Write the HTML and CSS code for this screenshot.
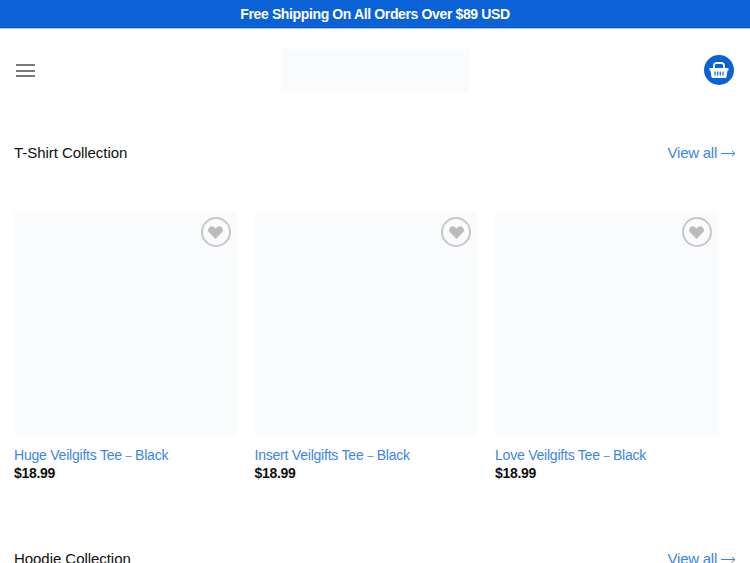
FILE: index.html
```html
<!DOCTYPE html>
<html lang="en">
<head>
  <meta charset="UTF-8" />
  <meta name="viewport" content="width=device-width, initial-scale=1.0"/>
  <title>Veilgifts</title>
  <link rel="stylesheet" href="styles.css">
</head>
<body>
  <div class="announce">Free Shipping On All Orders Over $89 USD</div>

  <header class="site-header">
    <button class="menu-btn" aria-label="Menu">
      <span></span><span></span><span></span>
    </button>
    <div class="logo"></div>
    <a class="cart-btn" href="#" aria-label="Cart">
      <svg width="20" height="16" viewBox="0 0 20 16" fill="none">
        <path d="M0.500 6h19v2.500h-1l-1 6.500a1 1 0 0 1-1 1H3.500a1 1 0 0 1-1-1l-1-6.500h-1z" fill="#fff"/>
        <path d="M5 6.500V3.500A2.500 2.500 0 0 1 7.500 1h5A2.500 2.500 0 0 1 15 3.500v3" stroke="#fff" stroke-width="1.800"/>
        <path d="M6 9.500v4M8.700 9.500v4M11.300 9.500v4M14 9.500v4" stroke="#0b62d6" stroke-width="1.200"/>
      </svg>
    </a>
  </header>

  <section class="collection">
    <div class="collection-head">
      <h2>T-Shirt Collection</h2>
      <a class="view-all" href="#">View all
        <svg width="15" height="9" viewBox="0 0 15 9" fill="none"><path d="M0 4.500h14M11 2l3 2.500L11 7" stroke="currentColor"/></svg>
      </a>
    </div>
    <div class="product-grid">
      <div class="product">
        <div class="thumb">
          <span class="wish"><svg width="15" height="13" viewBox="0 0 16 14"><path d="M8 14L1.400 7.300A4 4 0 0 1 1.300 1.600a4 4 0 0 1 5.500-.1L8 2.700l1.200-1.200a4 4 0 0 1 5.500.1 4 4 0 0 1-.1 5.700z" fill="#bdbdbd"/></svg></span>
        </div>
        <a class="product-name" href="#">Huge Veilgifts Tee <span class="dash">–</span> Black</a>
        <div class="price">$18.99</div>
      </div>
      <div class="product">
        <div class="thumb">
          <span class="wish"><svg width="15" height="13" viewBox="0 0 16 14"><path d="M8 14L1.400 7.300A4 4 0 0 1 1.300 1.600a4 4 0 0 1 5.500-.1L8 2.700l1.200-1.200a4 4 0 0 1 5.500.1 4 4 0 0 1-.1 5.700z" fill="#bdbdbd"/></svg></span>
        </div>
        <a class="product-name" href="#">Insert Veilgifts Tee <span class="dash">–</span> Black</a>
        <div class="price">$18.99</div>
      </div>
      <div class="product">
        <div class="thumb">
          <span class="wish"><svg width="15" height="13" viewBox="0 0 16 14"><path d="M8 14L1.400 7.300A4 4 0 0 1 1.300 1.600a4 4 0 0 1 5.500-.1L8 2.700l1.200-1.200a4 4 0 0 1 5.500.1 4 4 0 0 1-.1 5.700z" fill="#bdbdbd"/></svg></span>
        </div>
        <a class="product-name" href="#">Love Veilgifts Tee <span class="dash">–</span> Black</a>
        <div class="price">$18.99</div>
      </div>
    </div>
  </section>

  <section class="collection next">
    <div class="collection-head">
      <h2>Hoodie Collection</h2>
      <a class="view-all" href="#">View all
        <svg width="15" height="9" viewBox="0 0 15 9" fill="none"><path d="M0 4.500h14M11 2l3 2.500L11 7" stroke="currentColor"/></svg>
      </a>
    </div>
  </section>
</body>
</html>
```

FILE: styles.css
```css
html, body {
  height: 563px;
  overflow: hidden;
}

body {
  margin: 0;
  font-family: "Liberation Sans", Arial, sans-serif;
  background: #fff;
  color: #111;
}

.announce {
  height: 27px;
  line-height: 28px;
  background: #0b62d6;
  border-bottom: 1px solid #0455c2;
  box-shadow: 0 1px 0 #a9cbf5;
  color: #fff;
  font-size: 14px;
  font-weight: 700;
  letter-spacing: -0.37px;
  text-align: center;
}

.site-header {
  display: grid;
  grid-template-columns: 1fr 188px 1fr;
  align-items: center;
  height: 84px;
  padding: 0 16px;
}

.menu-btn {
  display: flex;
  flex-direction: column;
  gap: 3.500px;
  width: 19px;
  margin-top: 1px;
  padding: 0;
  border: none;
  background: none;
}

.menu-btn span {
  display: block;
  height: 2px;
  background: #7a7a7a;
}

.logo {
  height: 43px;
  background: #fafbfd;
}

.cart-btn {
  display: flex;
  align-items: center;
  justify-content: center;
  justify-self: end;
  width: 30px;
  height: 30px;
  border-radius: 50%;
  background: #0b62d6;
}

.collection {
  padding: 0 14px;
}

.collection-head {
  display: flex;
  align-items: center;
  justify-content: space-between;
  height: 80px;
}

.collection-head h2 {
  margin: 0;
  font-size: 15px;
  font-weight: 400;
  letter-spacing: -0.05px;
  color: #111;
}

.view-all {
  display: flex;
  align-items: center;
  gap: 4px;
  color: #3b85e8;
  font-size: 15px;
  letter-spacing: -0.25px;
  text-decoration: none;
}

.view-all svg {
  margin-top: 3px;
}

.product-grid {
  display: grid;
  grid-template-columns: repeat(3, 222.500px);
  column-gap: 18px;
  margin-top: 20px;
}

.thumb {
  position: relative;
  height: 223px;
  background: #fafbfd;
}

.wish {
  position: absolute;
  top: 5px;
  right: 6px;
  display: flex;
  align-items: center;
  justify-content: center;
  width: 26px;
  height: 26px;
  border: 2px solid #c8c8c8;
  border-radius: 50%;
}

.product-name {
  display: block;
  margin-top: 12px;
  color: #3b85e8;
  font-size: 14px;
  letter-spacing: -0.22px;
  line-height: 16px;
  text-decoration: none;
}

.dash {
  font-size: 11px;
  vertical-align: 1px;
}

.price {
  margin-top: 2px;
  font-size: 14px;
  font-weight: 700;
  letter-spacing: -0.3px;
  line-height: 16px;
}

.next {
  margin-top: 37px;
}
```
